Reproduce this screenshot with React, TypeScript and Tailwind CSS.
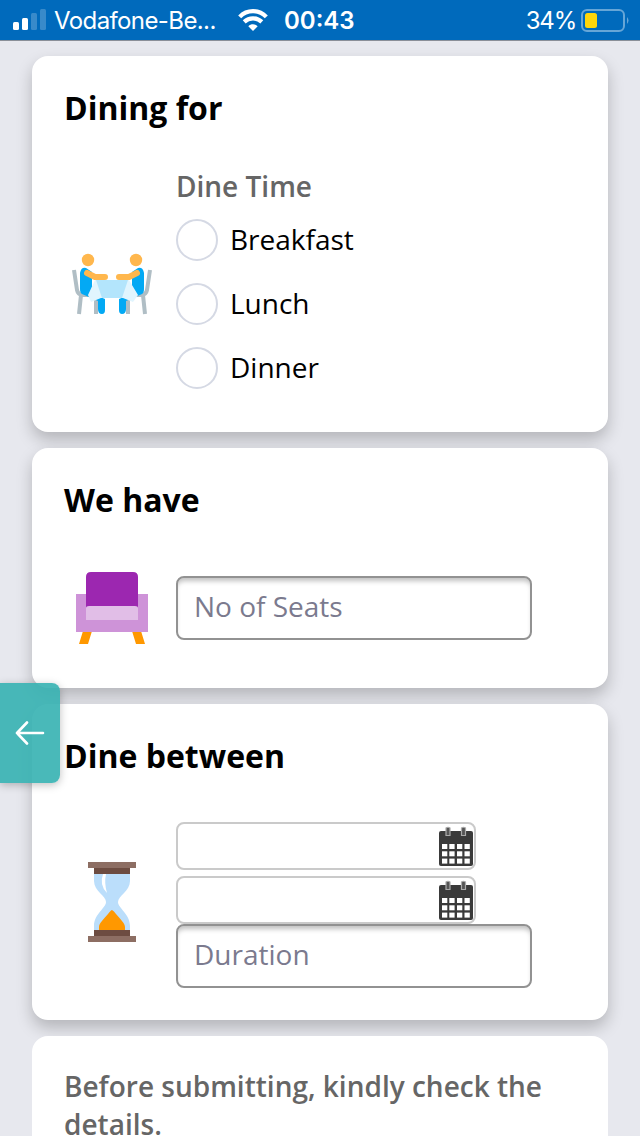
import type { ReactNode } from 'react'

const meals = ['Breakfast', 'Lunch', 'Dinner']

function StatusBar() {
  return (
    <header className="flex h-[41px] items-center border-b border-[#8a8f98] bg-[#006abc] font-['Inter','Liberation_Sans',sans-serif] text-white">
      <svg className="ml-[13px] h-[22px] w-[33px] shrink-0" viewBox="0 0 33 22" fill="currentColor">
        <rect x="0" y="13" width="6" height="8" rx="1.5" />
        <rect x="9" y="9" width="6" height="12" rx="1.5" />
        <rect x="18" y="4" width="6" height="17" rx="1.5" opacity="0.22" />
        <rect x="27" y="0" width="6" height="21" rx="1.5" opacity="0.22" />
      </svg>
      <span className="mt-px ml-[8px] w-[163px] text-[24px] leading-10 tracking-[-0.6px] whitespace-nowrap">
        Vodafone-Be...
      </span>
      <svg className="ml-[21px] h-[22px] w-[30px] shrink-0" viewBox="0 0 30 22">
        <g fill="none" stroke="currentColor" strokeWidth="4.2">
          <path d="M1.7 7.9 C9 0.3 21 0.3 28.3 7.9" />
          <path d="M6.2 12.9 C11.2 8.2 18.8 8.2 23.8 12.9" />
        </g>
        <path d="M10.3 17.2 C13 14.6 17 14.6 19.7 17.2 L15 22 Z" fill="currentColor" />
      </svg>
      <span className="mt-px ml-[16px] w-[74px] text-[24px] leading-10 font-semibold whitespace-nowrap">
        00:43
      </span>
      <span className="mt-px ml-auto text-[24px] leading-10 tracking-[-1.2px]">34%</span>
      <svg className="mr-[11px] ml-[5px] h-[23px] w-[48px] shrink-0" viewBox="0 0 48 23">
        <rect x="1" y="1" width="42" height="21" rx="5" fill="none" stroke="#66a6d7" strokeWidth="2" />
        <rect x="4" y="4" width="12" height="15" rx="2.5" fill="#ffd60a" />
        <path d="M46 8 Q49 11.5 46 15 Z" fill="#66a6d7" />
      </svg>
    </header>
  )
}

function Card({ title, className, children }: { title: string; className: string; children: ReactNode }) {
  return (
    <section
      className={`rounded-2xl bg-white px-8 pt-8 shadow-[0_8px_16px_rgba(0,0,0,0.22)] ${className}`}
    >
      <h2 className="text-[32px] leading-10 font-bold text-black">{title}</h2>
      {children}
    </section>
  )
}

function DiningIcon() {
  return (
    <svg className="h-20 w-24" viewBox="0 0 96 80">
      <g fill="none" stroke="#b0bec5" strokeWidth="4">
        <path d="M10 22 L13 42 Q14 47 19 47 H30 M17 47 L15 66 M32 46 V66" />
        <path d="M86 22 L83 42 Q82 47 77 47 H66 M79 47 L81 66 M64 46 V66" />
      </g>
      <path d="M16 25 Q17 19 22 20 L28 24 V38 Q31 40 29 46 L41 51 V62 Q41 66 38 66 Q34 66 34 61 V53 L18 46 Q16 45 16 41 Z" fill="#03a9f4" />
      <path d="M80 25 Q79 19 74 20 L68 24 V38 Q65 40 67 46 L55 51 V62 Q55 66 58 66 Q62 66 62 61 V53 L78 46 Q80 45 80 41 Z" fill="#03a9f4" />
      <path d="M31 32 H65 L74 47 L69 54 L59 50 H37 L27 54 L24 47 Z" fill="#e1f5fe" />
      <path d="M32 32 H64 L58 50 H38 Z" fill="#b3e5fc" />
      <g fill="#ffb74d">
        <circle cx="24" cy="12" r="6.2" />
        <circle cx="72" cy="12" r="6.2" />
      </g>
      <path d="M23 25 L31 29 H41 M73 25 L65 29 H55" fill="none" stroke="#ffb74d" strokeWidth="6" strokeLinecap="round" strokeLinejoin="round" />
    </svg>
  )
}

function ChairIcon() {
  return (
    <svg className="h-20 w-24" viewBox="0 0 96 80">
      <path d="M19 63 H28 L24 76 H15 Z M68 63 H77 L81 76 H72 Z" fill="#ff9800" />
      <path d="M12 26 H84 V64 H12 Z" fill="#ce93d8" />
      <path d="M22 9 Q22 4 27 4 H69 Q74 4 74 9 V41 H22 Z" fill="#9c27b0" />
      <path d="M22 52 V40 Q22 38 25 38 H71 Q74 38 74 40 V52 Z" fill="#e1bee7" />
    </svg>
  )
}

function HourglassIcon() {
  return (
    <svg className="h-24 w-24" viewBox="0 0 96 96">
      <path
        d="M30 18 H66 V27 C66 37 54 42 54 48 C54 54 66 60 66 72 V78 H30 V72 C30 60 42 54 42 48 C42 42 30 37 30 27 Z"
        fill="#bbdefb"
      />
      <path d="M48 56 Q50 57 52 60 C56 65 61 69 61 73 V77 H35 V73 C35 69 40 65 44 60 Q47 56 48 56 Z" fill="#ff9800" />
      <path d="M39 20 Q35 31 43 39 Q40 29 42 20 Z" fill="#fff" />
      <path d="M24 8 H72 V14 H24 Z M24 82 H72 V88 H24 Z" fill="#8d6e63" />
      <path d="M30 14 H66 V20 H30 Z M30 76 H66 V82 H30 Z" fill="#6d4c41" />
    </svg>
  )
}

function CalendarIcon() {
  return (
    <svg className="mb-px h-10 w-9" viewBox="0 0 36 40">
      <rect x="1" y="5" width="34" height="35" rx="2" fill="#3a3a3a" />
      <path d="M8 2 Q10 0.5 12 2 V9.5 H8 Z M23.5 2 Q25.5 0.5 27.5 2 V9.5 H23.5 Z" fill="#555" stroke="#aaa" strokeWidth="1.2" />
      <g fill="#fff">
        {[18, 25.3, 32.6].map((y) =>
          [4, 11.3, 19, 26.5].map((x) => <rect key={`${x}-${y}`} x={x} y={y} width="5.3" height="5" />),
        )}
      </g>
    </svg>
  )
}

function TextField({ label }: { label: string }) {
  return (
    <input
      placeholder={label}
      aria-label={label}
      className="block h-16 w-[356px] rounded-lg border-2 border-[#929292] bg-white px-4 pb-[4px] text-[28px] text-black shadow-[inset_0_5px_5px_-2px_rgba(0,0,0,0.25)] outline-none placeholder:text-[#7b7a8e] placeholder:opacity-100"
    />
  )
}

function DateField() {
  return (
    <div className="flex h-12 w-[300px] items-center justify-end rounded-lg border-2 border-[#cacaca] bg-white">
      <CalendarIcon />
    </div>
  )
}

export default function App() {
  return (
    <div className="relative h-[1136px] w-[640px] overflow-hidden bg-[#e7e8ee] font-['Open_Sans','Noto_Sans',sans-serif]">
      <StatusBar />
      <main className="flex flex-col gap-4 px-8 pt-[15px]">
        <Card title="Dining for" className="h-[376px]">
          <div className="mt-10 flex">
            <div className="mt-20 w-28 shrink-0">
              <DiningIcon />
            </div>
            <fieldset>
              <legend className="h-9 text-[28px] leading-9 font-semibold text-[#666]">Dine Time</legend>
              <div className="mt-[15px] flex flex-col gap-[22px]">
                {meals.map((meal) => (
                  <label key={meal} className="flex h-[42px] items-center gap-3 text-[28px] text-black">
                    <input
                      type="radio"
                      name="meal"
                      className="h-[42px] w-[42px] appearance-none rounded-full border-2 border-[#d5d9e4] bg-white"
                    />
                    <span className="pb-0.5">{meal}</span>
                  </label>
                ))}
              </div>
            </fieldset>
          </div>
        </Card>

        <Card title="We have" className="h-60">
          <div className="mt-12 flex">
            <div className="w-28 shrink-0">
              <ChairIcon />
            </div>
            <div className="mt-2">
              <TextField label="No of Seats" />
            </div>
          </div>
        </Card>

        <Card title="Dine between" className="h-[316px]">
          <div className="mt-[46px] flex">
            <div className="mt-8 w-28 shrink-0">
              <HourglassIcon />
            </div>
            <div>
              <DateField />
              <div className="mt-1.5">
                <DateField />
              </div>
              <TextField label="Duration" />
            </div>
          </div>
        </Card>

        <section className="h-40 rounded-2xl bg-white px-8 pt-[31px]">
          <p className="text-[28px] leading-[38px] font-semibold text-[#666]">
            Before submitting, kindly check the details.
          </p>
        </section>
      </main>

      <button
        aria-label="Back"
        className="absolute top-[683px] left-0 flex h-[100px] w-[60px] items-center justify-center rounded-r-lg bg-[#35b1b1]/90 shadow-[0_2px_8px_rgba(0,0,0,0.25)]"
      >
        <svg className="h-6 w-[30px]" viewBox="0 0 30 24" fill="none" stroke="#fff" strokeWidth="2.6" strokeLinecap="round" strokeLinejoin="round">
          <path d="M28 12 H2 M12 1.5 L2 12 L12 22.5" />
        </svg>
      </button>
    </div>
  )
}
